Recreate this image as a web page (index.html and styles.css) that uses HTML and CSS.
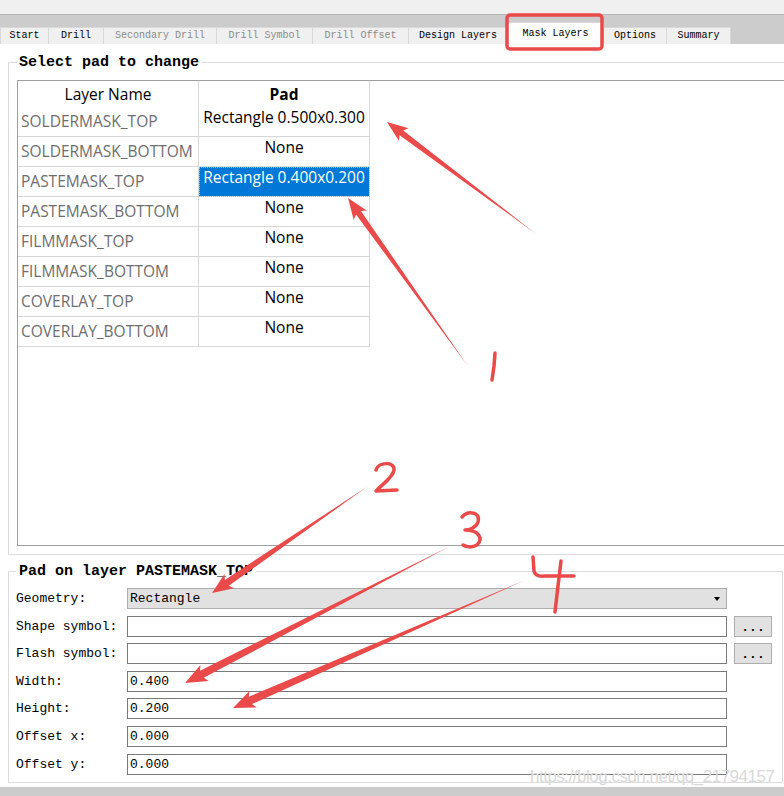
FILE: index.html
```html
<!DOCTYPE html>
<html>
<head>
<meta charset="utf-8">
<title>Mask Layers</title>
<link rel="stylesheet" href="styles.css">
</head>
<body>
<div class="window">
  <div class="topstrip"></div>
  <div class="tabbar">
    <div class="tab t1">Start</div>
    <div class="tab t2">Drill</div>
    <div class="tab t3 disabled">Secondary Drill</div>
    <div class="tab t4 disabled">Drill Symbol</div>
    <div class="tab t5 disabled">Drill Offset</div>
    <div class="tab t6">Design Layers</div>
    <div class="tab t7 active">Mask Layers</div>
    <div class="tab t8">Options</div>
    <div class="tab t9">Summary</div>
  </div>
  <div class="page">
    <fieldset class="group group-select">
      <legend>Select pad to change</legend>
      <div class="tableview">
        <div class="grid">
          <div class="hcell">Layer Name</div>
          <div class="hcell bold">Pad</div>
          <div class="name">SOLDERMASK_TOP</div><div class="pad">Rectangle 0.500x0.300</div>
          <div class="name">SOLDERMASK_BOTTOM</div><div class="pad">None</div>
          <div class="name">PASTEMASK_TOP</div><div class="pad selected">Rectangle 0.400x0.200</div>
          <div class="name">PASTEMASK_BOTTOM</div><div class="pad">None</div>
          <div class="name">FILMMASK_TOP</div><div class="pad">None</div>
          <div class="name">FILMMASK_BOTTOM</div><div class="pad">None</div>
          <div class="name">COVERLAY_TOP</div><div class="pad">None</div>
          <div class="name">COVERLAY_BOTTOM</div><div class="pad">None</div>
        </div>
      </div>
    </fieldset>
    <fieldset class="group group-pad">
      <legend>Pad on layer PASTEMASK_TOP</legend>
      <div class="form">
        <div class="label">Geometry:</div>
        <div class="combo"><span>Rectangle</span><span class="caret"></span></div>
        <div></div>
        <div class="label">Shape symbol:</div>
        <div class="input"></div>
        <div class="btn">...</div>
        <div class="label">Flash symbol:</div>
        <div class="input"></div>
        <div class="btn">...</div>
        <div class="label">Width:</div>
        <div class="input">0.400</div>
        <div></div>
        <div class="label">Height:</div>
        <div class="input">0.200</div>
        <div></div>
        <div class="label">Offset x:</div>
        <div class="input">0.000</div>
        <div></div>
        <div class="label">Offset y:</div>
        <div class="input">0.000</div>
        <div></div>
      </div>
    </fieldset>
  </div>
  <div class="bottomband"></div>

  <div class="watermark">https://blog.csdn.net/qq_21794157</div>

  <svg class="annot" width="784" height="796" viewBox="0 0 784 796">
    <rect x="507" y="15" width="95" height="34" rx="3" ry="3" fill="none" stroke="#ea4a4a" stroke-width="3.5"/>
    <g fill="#ea4a4a">
      <polygon transform="translate(387,122) rotate(216.9)" points="0,0 -21,-8 -18,-3 -186,0 -18,3 -21,8"/>
      <polygon transform="translate(348,198) rotate(234.5)" points="0,0 -21,-8 -18,-3 -206,0 -18,3 -21,8"/>
      <polygon transform="translate(212,593) rotate(145.6)" points="0,0 -21,-8.5 -18,-3.5 -188,0 -18,3.5 -21,8.5"/>
      <polygon transform="translate(185,683) rotate(152.7)" points="0,0 -22,-9 -19,-4 -298,0 -19,4 -22,9"/>
      <polygon transform="translate(233,708) rotate(156.35)" points="0,0 -22,-9 -19,-4 -317,0 -19,4 -22,9"/>
    </g>
    <g fill="none" stroke="#ea4a4a" stroke-width="3.5" stroke-linecap="round" stroke-linejoin="round">
      <path d="M495,353 L494,366 L492,380"/>
      <path d="M376,470 C378,462 395,461 394,470 C393,478 381,485 376,491 L397,490"/>
      <path d="M462,517 C468,510 481,512 478,522 C476,528 469,530 465,530 C478,530 484,538 477,545 C472,548 466,547 463,545"/>
      <path d="M533,557 L534,571 Q535,577 545,576 L574,576"/>
      <path d="M561,561 L558,586 L555,612"/>
    </g>
  </svg>
</div>
</body>
</html>
```

FILE: styles.css
```css
html, body {
  margin: 0;
  padding: 0;
  overflow: hidden;
  background: #ffffff;
}

.window {
  position: relative;
  width: 784px;
  height: 796px;
  overflow: hidden;
  font-family: "Liberation Mono", "DejaVu Sans Mono", monospace;
  color: #000;
}

.topstrip {
  height: 14px;
  background: #f0f0f0;
}

.tabbar {
  box-sizing: border-box;
  height: 30px;
  background: #cccccc;
  border-top: 1px solid #b4b4b4;
  display: flex;
  align-items: flex-end;
}

.tab {
  box-sizing: border-box;
  height: 17px;
  background: #f0f0f0;
  border: 1px solid #d9d9d9;
  border-bottom: none;
  border-left: none;
  font-size: 10px;
  line-height: 16px;
  text-align: center;
  white-space: nowrap;
}

.tab.t1 { width: 49px; border-left: 1px solid #d9d9d9; }
.tab.t2 { width: 55px; }
.tab.t3 { width: 113px; }
.tab.t4 { width: 96px; }
.tab.t5 { width: 96px; }
.tab.t6 { width: 99px; }
.tab.t7 { width: 96px; }
.tab.t8 { width: 63px; }
.tab.t9 { width: 64px; }

.tab.disabled { color: #8a8a8a; }

.tab.active {
  height: 22px;
  background: #ffffff;
  padding-top: 3px;
  line-height: 16px;
  border-color: #d9d9d9;
}

.page {
  height: 743px;
  overflow: hidden;
  background: #ffffff;
}

.group {
  margin: 0;
  border: 1px solid #dcdcdc;
  min-width: 0;
}

.group legend {
  font-weight: bold;
  font-size: 15px;
  line-height: 16px;
  padding: 2px 2px 0 2px;
  white-space: nowrap;
}

.group-select {
  margin-top: 9px;
  margin-left: 8px;
  margin-right: -30px;
  padding: 9px 0 8px 8px;
}

.tableview {
  box-sizing: border-box;
  height: 466px;
  border: 1px solid #a0a0a0;
  border-right: none;
  background: #ffffff;
}

.grid {
  display: grid;
  grid-template-columns: 181px 171px;
  grid-template-rows: 26px repeat(8, 30px);
  font-family: "Open Sans", "Noto Sans", sans-serif;
  font-size: 15.5px;
}

.grid > div {
  box-sizing: border-box;
  border-right: 1px solid #d8d8d8;
  white-space: nowrap;
  overflow: hidden;
}

.hcell {
  text-align: center;
  line-height: 26px;
  color: #000;
}

.hcell.bold { font-weight: bold; }

.name {
  border-bottom: 1px solid #d8d8d8;
  color: #6e6e6e;
  padding: 4px 0 0 3px;
  line-height: 21px;
}

.pad {
  border-bottom: 1px solid #d8d8d8;
  text-align: center;
  padding-top: 0;
  line-height: 21px;
  color: #000;
}

.pad.selected {
  background: #0078d7;
  color: #ffffff;
  outline: 1px dotted #f3b45f;
  outline-offset: -1px;
}

.group-pad {
  margin: 7px 1px 0 8px;
  padding: 8px 10px 7px 7px;
}

.group-pad legend {
  padding: 2px 3px 0 3px;
}

.form {
  display: grid;
  grid-template-columns: 111px 600px 45px;
  grid-template-rows: repeat(7, 21px);
  row-gap: 6.6px;
  align-items: center;
  font-size: 13px;
}

.label {
  white-space: nowrap;
}

.input, .combo {
  box-sizing: border-box;
  height: 21px;
  border: 1px solid #7a7a7a;
  background: #ffffff;
  padding-left: 2px;
  line-height: 19px;
  white-space: nowrap;
}

.combo {
  background: #e1e1e1;
  border-color: #adadad;
  display: flex;
  align-items: center;
  justify-content: space-between;
  padding-right: 6px;
}

.caret {
  width: 0;
  height: 0;
  border-left: 3.5px solid transparent;
  border-right: 3.5px solid transparent;
  border-top: 4px solid #000;
}

.btn {
  box-sizing: border-box;
  justify-self: end;
  width: 38px;
  height: 21px;
  background: #e1e1e1;
  border: 1px solid #adadad;
  text-align: center;
  font-weight: bold;
  line-height: 21px;
  font-size: 13px;
}

.bottomband {
  height: 9px;
  background: #cccccc;
}

.watermark {
  position: absolute;
  left: 530px;
  top: 767px;
  font-family: "Liberation Sans", Arial, sans-serif;
  font-size: 17px;
  color: #d9d9d9;
  white-space: nowrap;
  letter-spacing: -0.5px;
}

.annot {
  position: absolute;
  left: 0;
  top: 0;
  pointer-events: none;
}
```
